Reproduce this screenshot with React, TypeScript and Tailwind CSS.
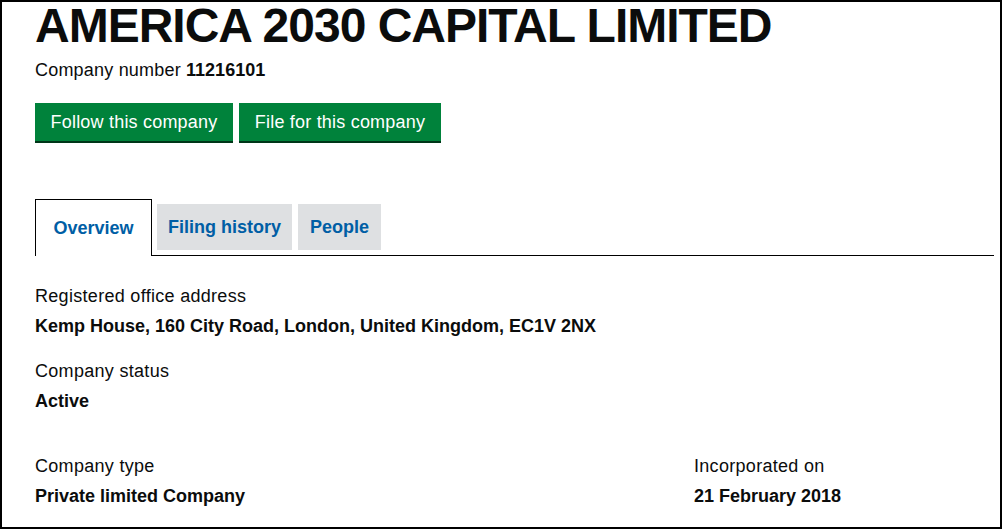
import React from "react";

const font = { fontFamily: '"Liberation Sans", Arial, sans-serif' };

function Field({ label, value }: { label: string; value: string }) {
  return (
    <div>
      <div className="text-[18px] leading-[20px] tracking-[0.3px] text-[#0b0c0c]">{label}</div>
      <div className="mt-[10px] text-[18px] leading-[20px] font-bold text-[#0b0c0c]">{value}</div>
    </div>
  );
}

export default function App() {
  return (
    <div
      className="w-[1002px] h-[529px] bg-white border-2 border-black overflow-hidden box-border"
      style={font}
    >
      <div className="pl-[33px] pr-[6px]">
        {/* Header */}
        <h1 className="-mt-[2px] text-[48px] leading-[52px] font-bold text-[#0b0c0c] tracking-[-1px]">
          AMERICA 2030 CAPITAL LIMITED
        </h1>
        <p className="mt-[8px] text-[18px] leading-[20px] tracking-[0.2px] text-[#0b0c0c]">
          Company number <span className="font-bold tracking-normal">11216101</span>
        </p>

        <div className="mt-[23px] flex gap-[6px]">
          <button className="h-[38px] w-[198px] bg-[#00823b] text-white text-[18px] tracking-[0.2px] shadow-[0_2px_0_#003618]">
            Follow this company
          </button>
          <button className="h-[38px] w-[202px] bg-[#00823b] text-white text-[18px] tracking-[0.2px] shadow-[0_2px_0_#003618]">
            File for this company
          </button>
        </div>

        {/* Tabs */}
        <div className="mt-[58px] flex items-end border-b border-black w-[959px]">
          <div className="-mb-px h-[57px] w-[117px] border border-b-0 border-black bg-white flex items-center justify-center text-[18px] font-bold text-[#005ea5]">
            Overview
          </div>
          <div className="ml-[5px] mb-[5px] h-[46px] w-[135px] bg-[#dee0e2] flex items-center justify-center text-[18px] font-bold text-[#005ea5]">
            Filing history
          </div>
          <div className="ml-[6px] mb-[5px] h-[46px] w-[83px] bg-[#dee0e2] flex items-center justify-center text-[18px] font-bold text-[#005ea5]">
            People
          </div>
        </div>

        {/* Overview */}
        <div className="mt-[30px] flex flex-col gap-[25px]">
          <Field label="Registered office address" value="Kemp House, 160 City Road, London, United Kingdom, EC1V 2NX" />
          <Field label="Company status" value="Active" />
          <div className="mt-[20px] flex">
            <div className="w-[659px]">
              <Field label="Company type" value="Private limited Company" />
            </div>
            <Field label="Incorporated on" value="21 February 2018" />
          </div>
        </div>
      </div>
    </div>
  );
}
